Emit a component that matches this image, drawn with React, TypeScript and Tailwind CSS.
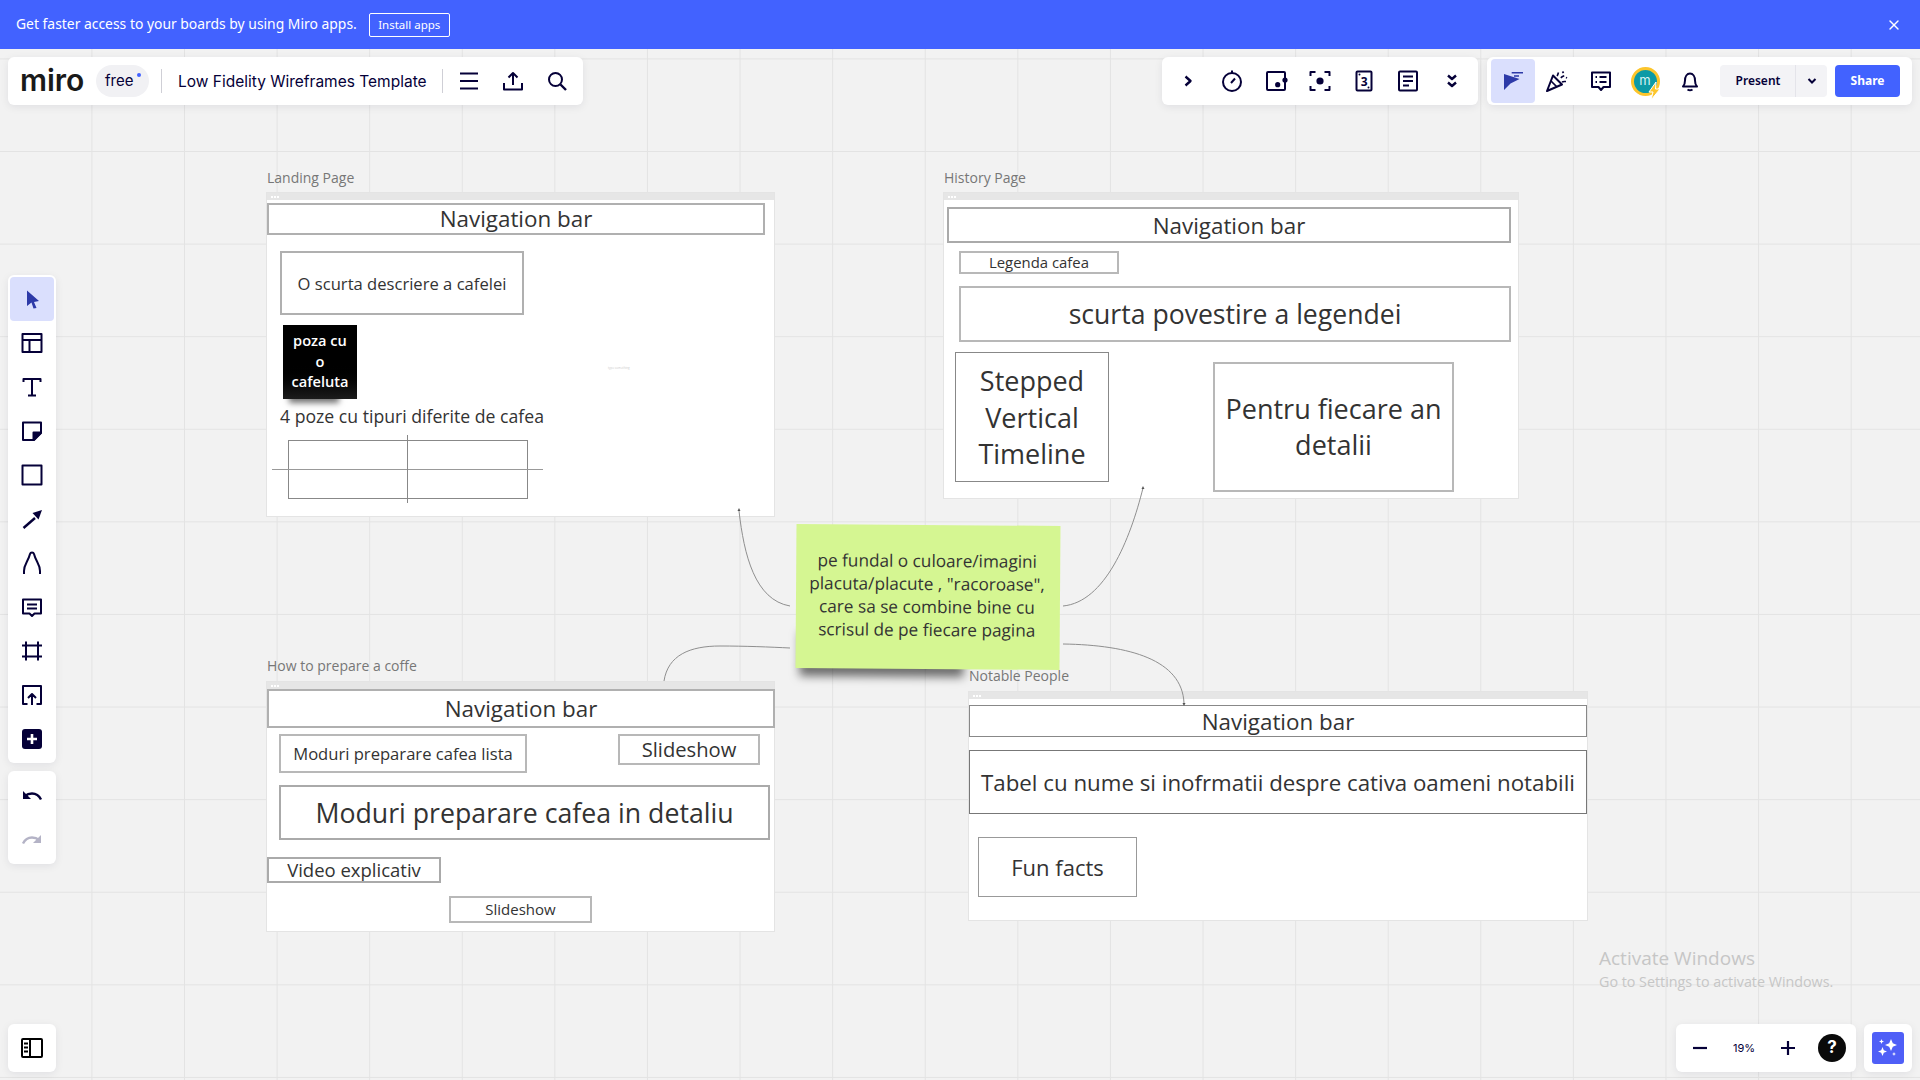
import React from 'react';
import { X } from 'lucide-react';

const NAVY = '#050038';

const Svg: React.FC<{ children: React.ReactNode; size?: number }> = ({ children, size = 24 }) => (
  <svg width={size} height={size} viewBox="0 0 24 24" fill="none" stroke={NAVY} strokeWidth={2} strokeLinecap="butt" strokeLinejoin="round">
    {children}
  </svg>
);

const icons: Record<string, React.ReactNode> = {
  menu: <Svg><path d="M3 4.500h18M3 12h18M3 19.500h18" /></Svg>,
  upload: <Svg><path d="M3 14v6.500h18V14M12 16V4M7.500 8.500 12 4l4.500 4.500" /></Svg>,
  search: <Svg><circle cx="10.500" cy="10.500" r="6.500" /><path d="m15.500 15.500 5.500 5.500" strokeWidth={2.4} /></Svg>,
  chevron: <Svg><path d="m9.500 7.500 5 4.500-5 4.500" strokeWidth={2.4} /></Svg>,
  timer: <Svg><circle cx="12" cy="13" r="9" /><path d="M12 1.500v2.500M11 14l4-4.500" /></Svg>,
  boxDots: (
    <Svg>
      <rect x="3" y="3" width="18" height="18" rx="1" />
      <circle cx="13.700" cy="15.700" r="2.600" fill={NAVY} stroke="none" />
      <circle cx="21" cy="11" r="2.600" fill={NAVY} stroke="none" />
    </Svg>
  ),
  focus: (
    <Svg>
      <path d="M2.500 7V3h5M16.500 3h5v4M21.500 17v4h-5M7.500 21h-5v-4" />
      <circle cx="12" cy="12" r="3.600" fill={NAVY} stroke="none" />
    </Svg>
  ),
  card: (
    <Svg>
      <rect x="4.500" y="2.500" width="15" height="19" rx="1" />
      <text x="12.200" y="16.500" fontSize="12" fontWeight="700" fontFamily="'Open Sans',sans-serif" textAnchor="middle" fill={NAVY} stroke="none">3</text>
      <circle cx="7.500" cy="5.500" r="1" fill={NAVY} stroke="none" />
      <circle cx="16.500" cy="18.500" r="1" fill={NAVY} stroke="none" />
    </Svg>
  ),
  doc: <Svg><rect x="3" y="2.500" width="18" height="19" rx="1" /><path d="M7 7.500h10M7 12h10M7 16.500h6" /></Svg>,
  chevronsDown: <Svg><path d="m8 6.500 4 3.500 4-3.500M8 13.500l4 3.500 4-3.500" strokeWidth={2.4} /></Svg>,
  cursor: (
    <Svg>
      <path d="M3 5v16l6.500-6.500 9-4.500z" fill="#2d3aa8" stroke="none" />
      <path d="M10.700 3.700H22M13 7h5" stroke="#2d3aa8" strokeWidth={1.6} />
    </Svg>
  ),
  party: (
    <Svg>
      <path d="M2 22 8 6.500 17 15.500z" />
      <path d="m6 12 6 6M12 7c1-1 .8-2 1.500-3.500M16 9c.8-1.500 2-1.200 3-2.500M17 13c1.500-.8 2.500-.4 4-.5M17.500 2.500l1 1.500M21 8.500l1 .5" strokeWidth={1.7} />
    </Svg>
  ),
  commentList: (
    <Svg>
      <path d="M3 3.500h18v14.500h-6.500L12 21l-2.500-3H3z" />
      <path d="M6.500 8h1.500M10.500 8h7M6.500 13h1.500M10.500 13h7" />
    </Svg>
  ),
  bell: <Svg><path d="M5 17.500c1.500-1.500 2-3 2-6 0-4 2-7 5-7s5 3 5 7c0 3 .5 4.500 2 6zM9.500 20.500c1.500 1 3.500 1 5 0" /></Svg>,
  select: <Svg><path d="M7 3.500 19 14l-5 1 2.500 6-3 .5-2-6L7 19z" fill="#2d3aa8" stroke="none" /></Svg>,
  templates: <Svg><rect x="2.500" y="3" width="19" height="18" /><path d="M2.500 9h19M9.500 9v12" /></Svg>,
  text: <Svg><path d="M3.500 7V4h17v3M12 4v16M8 20.500h8" /></Svg>,
  sticky: <Svg><path d="M21 14V3.500H3V21h11z" strokeLinejoin="round" /><path d="M21 13.500 13.500 21v-7.500z" fill={NAVY} /></Svg>,
  rect: <Svg><rect x="2.500" y="2.500" width="19" height="19" /></Svg>,
  arrow: <Svg><path d="M3.500 21 15 11" strokeWidth={2.4} /><path d="m22 3-3.500 9.500-6-6.500z" fill={NAVY} stroke="none" /></Svg>,
  pen: <Svg><path d="M4 23v-3c0-7 4-9 6-17 .5-2 3.500-2 4 0 2 8 6 10 6 17v3" /></Svg>,
  comment: <Svg><path d="M3 4.500h18v14h-6.500L12 21l-2.500-2.500H3z" /><path d="M7 9.500h10M7 13.500h10" /></Svg>,
  crop: <Svg><path d="M2 6.500h20M2 17.500h20M6 2.500v19M18 2.500v19" /></Svg>,
  uploadBox: <Svg><path d="M7.500 21H3V3h18v18h-4.500M12 22V11M8 15l4-4 4 4" /></Svg>,
  plusBox: (
    <Svg>
      <rect x="2" y="2" width="20" height="20" rx="3" fill={NAVY} stroke="none" />
      <path d="M12 7v10M7 12h10" stroke="#fff" strokeWidth={2.6} />
    </Svg>
  ),
  undo: <Svg><path d="M21 16.500c-2-4-5.500-6-9-6-2.500 0-5 .7-7 2.500" strokeWidth={2.4} /><path d="M3 8v8h8z" fill={NAVY} stroke="none" /></Svg>,
  redo: (
    <svg width={24} height={24} viewBox="0 0 24 24" fill="none" stroke="#b4b3c6" strokeWidth={2.4}>
      <path d="M3 16.500c2-4 5.500-6 9-6 2.500 0 5 .7 7 2.500" />
      <path d="M21 8v8h-8z" fill="#b4b3c6" stroke="none" />
    </svg>
  ),
  sidebar: (
    <svg width={24} height={24} viewBox="0 0 24 24" fill="none" stroke="#000" strokeWidth={2}>
      <rect x="2" y="3" width="20" height="18" rx="1" />
      <path d="M10 3v18" />
      <path d="M4 7.500h4M4 11.500h4M4 15.500h4" strokeWidth={2} />
    </svg>
  ),
  minus: <Svg><path d="M5 12h14" strokeWidth={2.2} /></Svg>,
  plus: <Svg><path d="M5 12h14M12 5v14" strokeWidth={2.2} /></Svg>,
};

const IconButton: React.FC<{ name: string; active?: boolean }> = ({ name, active }) => (
  <div className={`w-11 h-11 shrink-0 flex items-center justify-center rounded ${active ? 'bg-[#dadffd]' : ''}`}>
    {icons[name]}
  </div>
);

const Panel: React.FC<{ className?: string; children: React.ReactNode }> = ({ className, children }) => (
  <div className={`absolute bg-white rounded-md shadow-[0_2px_8px_rgba(5,0,56,0.08)] ${className ?? ''}`}>{children}</div>
);

const Frame: React.FC<{ label: string; className: string; labelClass: string; children: React.ReactNode }> = ({ label, className, labelClass, children }) => (
  <div className={`absolute bg-white outline outline-[#e4e4e4] ${className}`}>
    <div className={`absolute left-0 whitespace-nowrap font-['Open_Sans',sans-serif] text-[14px] leading-5 text-[#777] ${labelClass}`}>{label}</div>
    <div className="h-[7px] bg-[#e6e6e6] flex items-center gap-px pl-1">
      <span className="w-[2px] h-[2px] bg-white" />
      <span className="w-[2px] h-[2px] bg-white" />
      <span className="w-[2px] h-[2px] bg-white" />
    </div>
    {children}
  </div>
);

const Box: React.FC<{ className: string; children?: React.ReactNode }> = ({ className, children }) => (
  <div className={`absolute flex items-center justify-center text-center bg-white font-['Open_Sans',sans-serif] text-[#333] ${className}`}>
    {children}
  </div>
);

const Connectors = () => (
  <svg className="absolute inset-0 w-full h-full" viewBox="0 49 1920 1031" fill="none" stroke="#8f8f8f" strokeWidth={1}>
    <path d="M739 511C744 555 755 600 790 606" />
    <path d="M1143 488C1130 540 1105 602 1063 606" />
    <path d="M664 681C668 655 690 646 720 646C745 646 770 647 790 648" />
    <path d="M1063 644C1130 645 1182 660 1184 703" />
    <path d="m737.500 511 1.500-3 1.500 3zM1141.500 489l1.500-3 1.500 3zM1182.500 703l1.500 3 1.500-3z" fill="#555" stroke="none" />
  </svg>
);

export default function App() {
  return (
    <div className="w-screen h-screen overflow-hidden flex flex-col bg-[#f2f2f2]">
      <div className="h-[49px] shrink-0 bg-[#4262ff] flex items-center pl-4 pr-[18px] text-white font-['Noto_Sans',sans-serif]">
        <span className="text-[13.900px]">Get faster access to your boards by using Miro apps.</span>
        <span className="ml-3 w-[81px] h-6 flex items-center justify-center border border-white rounded-[2px] text-[11.500px]">Install apps</span>
        <X className="ml-auto w-4 h-4" strokeWidth={2} />
      </div>

      <div className="relative flex-1 bg-[linear-gradient(to_right,#e3e3e3_1px,transparent_1px),linear-gradient(to_bottom,#e3e3e3_1px,transparent_1px)] bg-[size:92.6px_92.6px] bg-[position:91.4px_9.4px]">
        <Frame label="Landing Page" labelClass="top-[-25px]" className="left-[267px] top-[144px] w-[507px] h-[323px]">
          <Box className="left-0 top-[10px] w-[498px] h-[32px] border-2 border-[#b0b0b0] text-[22.400px]">Navigation bar</Box>
          <Box className="left-[13px] top-[58px] w-[244px] h-[64px] pt-[2px] border-2 border-[#b0b0b0] text-[16.600px]">O scurta descriere a cafelei</Box>
          <Box className="left-[16px] top-[132px] w-[74px] h-[74px] bg-gradient-to-b from-black via-black to-[#1c1c1c] !text-white font-semibold text-[14.600px] leading-[20.500px] shadow-[-6px_16px_6px_-12px_rgba(0,0,0,0.55)]">
            <div className="-mt-[2px]">
              poza cu
              <br />
              o
              <br />
              cafeluta
            </div>
          </Box>
          <div className="absolute left-[13px] top-[211px] whitespace-nowrap font-['Open_Sans',sans-serif] text-[17.650px] leading-6 text-[#333]">4 poze cu tipuri diferite de cafea</div>
          <div className="absolute left-[21px] top-[247px] w-[240px] h-[59px] border border-[#888]" />
          <div className="absolute left-[5px] top-[276px] w-[271px] h-px bg-[#999]" />
          <div className="absolute left-[140px] top-[242px] w-px h-[68px] bg-[#888]" />
          <div className="absolute left-[341px] top-[173px] whitespace-nowrap font-['Open_Sans',sans-serif] text-[3px] text-[#ccc]">type something</div>
        </Frame>

        <Frame label="History Page" labelClass="top-[-25px]" className="left-[944px] top-[144px] w-[574px] h-[305px]">
          <Box className="left-[3px] top-[14px] w-[564px] h-[36px] pt-[2px] border-2 border-[#aaa] text-[22.400px]">Navigation bar</Box>
          <Box className="left-[15px] top-[58px] w-[160px] h-[23px] border-2 border-[#b8b8b8] text-[14.900px]">Legenda cafea</Box>
          <Box className="left-[15px] top-[93px] w-[552px] h-[56px] pt-[2px] border-2 border-[#b8b8b8] text-[26.600px]">scurta povestire a legendei</Box>
          <Box className="left-[11px] top-[159px] w-[154px] h-[130px] pt-[2px] border border-[#888] text-[27px] leading-[36.500px]">
            Stepped
            <br />
            Vertical
            <br />
            Timeline
          </Box>
          <Box className="left-[269px] top-[169px] w-[241px] h-[130px] border-2 border-[#b8b8b8] text-[27px] leading-[36px]">
            Pentru fiecare an
            <br />
            detalii
          </Box>
        </Frame>

        <Frame label="How to prepare a coffe" labelClass="top-[-26px]" className="left-[267px] top-[633px] w-[507px] h-[249px]">
          <Box className="left-0 top-[7px] w-[508px] h-[39px] border-2 border-[#b0b0b0] text-[22.400px]">Navigation bar</Box>
          <Box className="left-[12px] top-[52px] w-[248px] h-[39px] pt-[2px] border-2 border-[#b8b8b8] text-[16.600px]">Moduri preparare cafea lista</Box>
          <Box className="left-[351px] top-[52px] w-[142px] h-[31px] border-2 border-[#b8b8b8] text-[20.200px]">Slideshow</Box>
          <Box className="left-[12px] top-[103px] w-[491px] h-[55px] pt-[2px] border-2 border-[#aaa] text-[26.700px]">Moduri preparare cafea in detaliu</Box>
          <Box className="left-0 top-[175px] w-[174px] h-[26px] border-2 border-[#aaa] text-[18.500px]">Video explicativ</Box>
          <Box className="left-[182px] top-[214px] w-[143px] h-[27px] border-2 border-[#b8b8b8] text-[15px]">Slideshow</Box>
        </Frame>

        <Frame label="Notable People" labelClass="top-[-26px]" className="left-[969px] top-[643px] w-[618px] h-[228px]">
          <Box className="left-0 top-[13px] w-[618px] h-[32px] pt-[1px] border border-[#888] text-[22.400px]">Navigation bar</Box>
          <Box className="left-0 top-[58px] w-[618px] h-[64px] pt-[1px] border border-[#777] text-[22.300px]">Tabel cu nume si inofrmatii despre cativa oameni notabili</Box>
          <Box className="left-[9px] top-[145px] w-[159px] h-[60px] border border-[#999] text-[22px]">Fun facts</Box>
        </Frame>

        <Connectors />

        <div className="absolute left-[796px] top-[476px] w-[264px] h-[144px] rotate-[0.4deg] bg-[#d5f692] flex items-center justify-center text-center font-['Open_Sans',sans-serif] text-[17.200px] leading-[23px] text-[#333] shadow-[-46px_58px_10px_-50px_rgba(0,0,0,0.55)]">
          <div className="-mt-[4px] -ml-[2px] whitespace-nowrap">
            pe fundal o culoare/imagini
            <br />
            placuta/placute , "racoroase",
            <br />
            care sa se combine bine cu
            <br />
            scrisul de pe fiecare pagina
          </div>
        </div>

        <div className="absolute left-[1599px] top-[895px] font-['Open_Sans',sans-serif] text-[#c6c6c6] whitespace-nowrap">
          <div className="text-[19px] leading-7">Activate Windows</div>
          <div className="text-[14.300px] leading-5">Go to Settings to activate Windows.</div>
        </div>

        {/* top bars */}
        <Panel className="left-2 top-2 h-12 w-[575px] flex items-center pl-3">
          <span className="w-[64px] font-['Inter',sans-serif] font-semibold text-[30px] leading-none text-[#1a1a1a] -mt-[2px]">miro</span>
          <div className="relative ml-3 w-[53px] h-8 rounded-full bg-[#f1f1f4] font-['Inter',sans-serif] text-[15px] text-[#050038] flex items-center pl-[9px]">
            free
            <span className="absolute right-[8px] top-[8px] w-1 h-1 rounded-full bg-[#4262ff]" />
          </div>
          <div className="ml-3 w-px h-6 bg-[#cfcfd6]" />
          <span className="ml-4 mt-[2px] w-[248px] whitespace-nowrap font-['Inter',sans-serif] text-[15.500px] text-[#050038]">Low Fidelity Wireframes Template</span>
          <div className="ml-[16px] w-px h-6 bg-[#cfcfd6]" />
          <div className="ml-1 flex">
            <IconButton name="menu" />
            <IconButton name="upload" />
            <IconButton name="search" />
          </div>
        </Panel>

        <Panel className="left-[1162px] top-2 h-12 w-[316px] flex items-center pl-1">
          <IconButton name="chevron" />
          <IconButton name="timer" />
          <IconButton name="boxDots" />
          <IconButton name="focus" />
          <IconButton name="card" />
          <IconButton name="doc" />
          <IconButton name="chevronsDown" />
        </Panel>

        <Panel className="left-[1487px] top-2 h-12 w-[425px] flex items-center pl-1">
          <IconButton name="cursor" active />
          <IconButton name="party" />
          <IconButton name="commentList" />
          <div className="relative w-11 h-11 flex items-center justify-center">
            <div className="w-[29px] h-[29px] rounded-full border-[3px] border-[#fcc52b] bg-[#0b9aa6] flex items-center justify-center font-['Inter',sans-serif] text-[13px] text-[#d6f3f3]">m</div>
            <svg className="absolute left-[25px] top-[23px]" width="14" height="18" viewBox="0 0 14 18">
              <path d="M8 0 1 10h4l-2 8 9-11H7.500z" fill="#fcc52b" stroke="#fff" strokeWidth={1} />
            </svg>
          </div>
          <div className="ml-px"><IconButton name="bell" /></div>
          <div className="ml-2 w-[107px] h-8 rounded bg-[#f3f3f6] flex items-center font-['Noto_Sans',sans-serif] font-semibold text-[12px] text-[#050038]">
            <span className="w-[75px] pl-px text-center">Present</span>
            <span className="w-px h-8 bg-[#e4e4ea]" />
            <svg className="ml-[11px]" width="10" height="10" viewBox="0 0 10 10" fill="none" stroke={NAVY} strokeWidth={2}><path d="m1.500 3 3.500 3.500L8.500 3" /></svg>
          </div>
          <div className="ml-2 w-[65px] h-8 rounded bg-[#4262ff] flex items-center justify-center font-['Noto_Sans',sans-serif] font-bold text-[12px] text-white">Share</div>
        </Panel>

        {/* left tools */}
        <Panel className="left-2 top-[226px] w-12 py-[2px] flex flex-col items-center">
          <IconButton name="select" active />
          <IconButton name="templates" />
          <IconButton name="text" />
          <IconButton name="sticky" />
          <IconButton name="rect" />
          <IconButton name="arrow" />
          <IconButton name="pen" />
          <IconButton name="comment" />
          <IconButton name="crop" />
          <IconButton name="uploadBox" />
          <IconButton name="plusBox" />
        </Panel>
        <Panel className="left-2 top-[722px] w-12 h-[93px] py-[2px] flex flex-col items-center">
          <IconButton name="undo" />
          <IconButton name="redo" />
        </Panel>

        {/* bottom */}
        <Panel className="left-2 top-[975px] w-12 h-12 flex items-center justify-center">{icons.sidebar}</Panel>
        <Panel className="left-[1676px] top-[975px] w-[180px] h-12 flex items-center pl-[2px]">
          <IconButton name="minus" />
          <span className="w-11 text-center font-['Inter',sans-serif] text-[11px] text-[#050038]">19%</span>
          <IconButton name="plus" />
          <div className="ml-[8px] w-7 h-7 rounded-full bg-[#0a0a0a] flex items-center justify-center font-['Inter',sans-serif] font-bold text-[17px] text-white">?</div>
        </Panel>
        <Panel className="left-[1864px] top-[975px] w-12 h-12 flex items-center justify-center">
          <div className="w-8 h-8 rounded-[3px] bg-[#4f5ff7] flex items-center justify-center">
            <svg width="24" height="24" viewBox="0 0 24 24" fill="#fff">
              <path d="M15 3l1.800 4.200L21 9l-4.200 1.800L15 15l-1.800-4.200L9 9l4.200-1.800zM6.500 11l1.300 3.200L11 15.500l-3.200 1.300L6.500 20l-1.300-3.200L2 15.500l3.200-1.300zM5.500 3l.7 1.800L8 5.500l-1.800.7L5.500 8l-.7-1.800L3 5.500l1.800-.7zM18 16l.6 1.400 1.400.6-1.400.6L18 20l-.6-1.400L16 18l1.400-.6z" />
            </svg>
          </div>
        </Panel>
      </div>
    </div>
  );
}
